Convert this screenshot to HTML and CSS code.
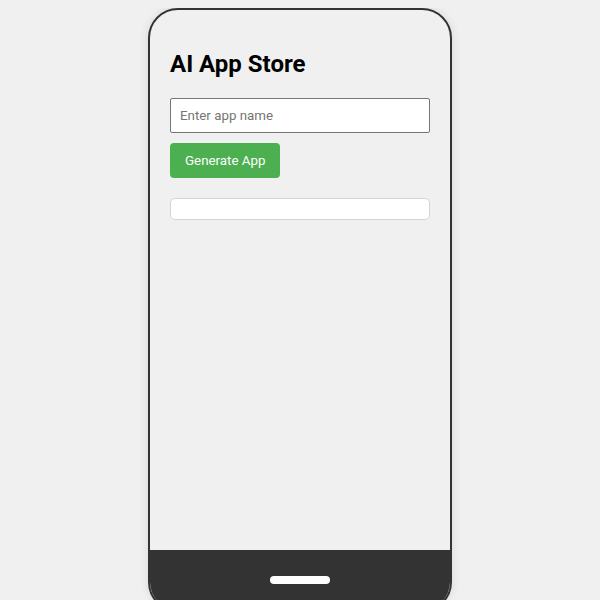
FILE: index.html
```html
<!DOCTYPE html>
<html>
<head>
<meta charset="utf-8">
<link rel="stylesheet" href="styles.css">
</head>
<body>
<div class="phone">
  <div class="screen">
    <h1 class="title">AI App Store</h1>
    <input class="app-input" type="text" placeholder="Enter app name">
    <button class="gen-btn">Generate App</button>
    <div class="result"></div>
  </div>
  <div class="bottom-bar"><div class="home-indicator"></div></div>
</div>
</body>
</html>
```

FILE: styles.css
```css
html, body {
  background: #f0f0f0;
}
body {
  margin: 8px 0 0 0;
  font-family: Roboto, "Liberation Sans", sans-serif;
  display: flex;
  justify-content: center;
}
.phone {
  width: 300px;
  height: 600px;
  border: 2px solid #333;
  border-radius: 30px;
  background: #f0f0f0;
  box-shadow: 0 0 10px rgba(0,0,0,0.1);
  display: flex;
  flex-direction: column;
  overflow: hidden;
  flex-shrink: 0;
}
.screen {
  flex: 1;
  padding: 20px;
  display: flex;
  flex-direction: column;
  align-items: flex-start;
}
.title {
  font-size: 24px;
  font-weight: bold;
  margin: 20px 0;
  line-height: 28px;
  color: #000;
}
.app-input {
  width: 260px;
  box-sizing: border-box;
  height: 35px;
  padding: 0 9px;
  font-family: inherit;
  font-size: 13.333px;
  border: 1px solid #767676;
  border-radius: 2px;
  background: #fff;
  margin: 0 0 10px 0;
}
.app-input::placeholder {
  color: #757575;
}
.gen-btn {
  background: #4CAF50;
  color: #fff;
  border: none;
  border-radius: 4px;
  font-family: inherit;
  font-size: 13.333px;
  height: 35px;
  padding: 0 15px;
  margin: 0;
  cursor: pointer;
}
.result {
  margin-top: 20px;
  width: 260px;
  box-sizing: border-box;
  height: 22px;
  background: #fff;
  border: 1px solid #d4d4d4;
  border-radius: 5px;
}
.bottom-bar {
  height: 60px;
  background: #333;
  display: flex;
  align-items: center;
  justify-content: center;
  flex-shrink: 0;
}
.home-indicator {
  width: 60px;
  height: 8px;
  border-radius: 4px;
  background: #fff;
}
```
